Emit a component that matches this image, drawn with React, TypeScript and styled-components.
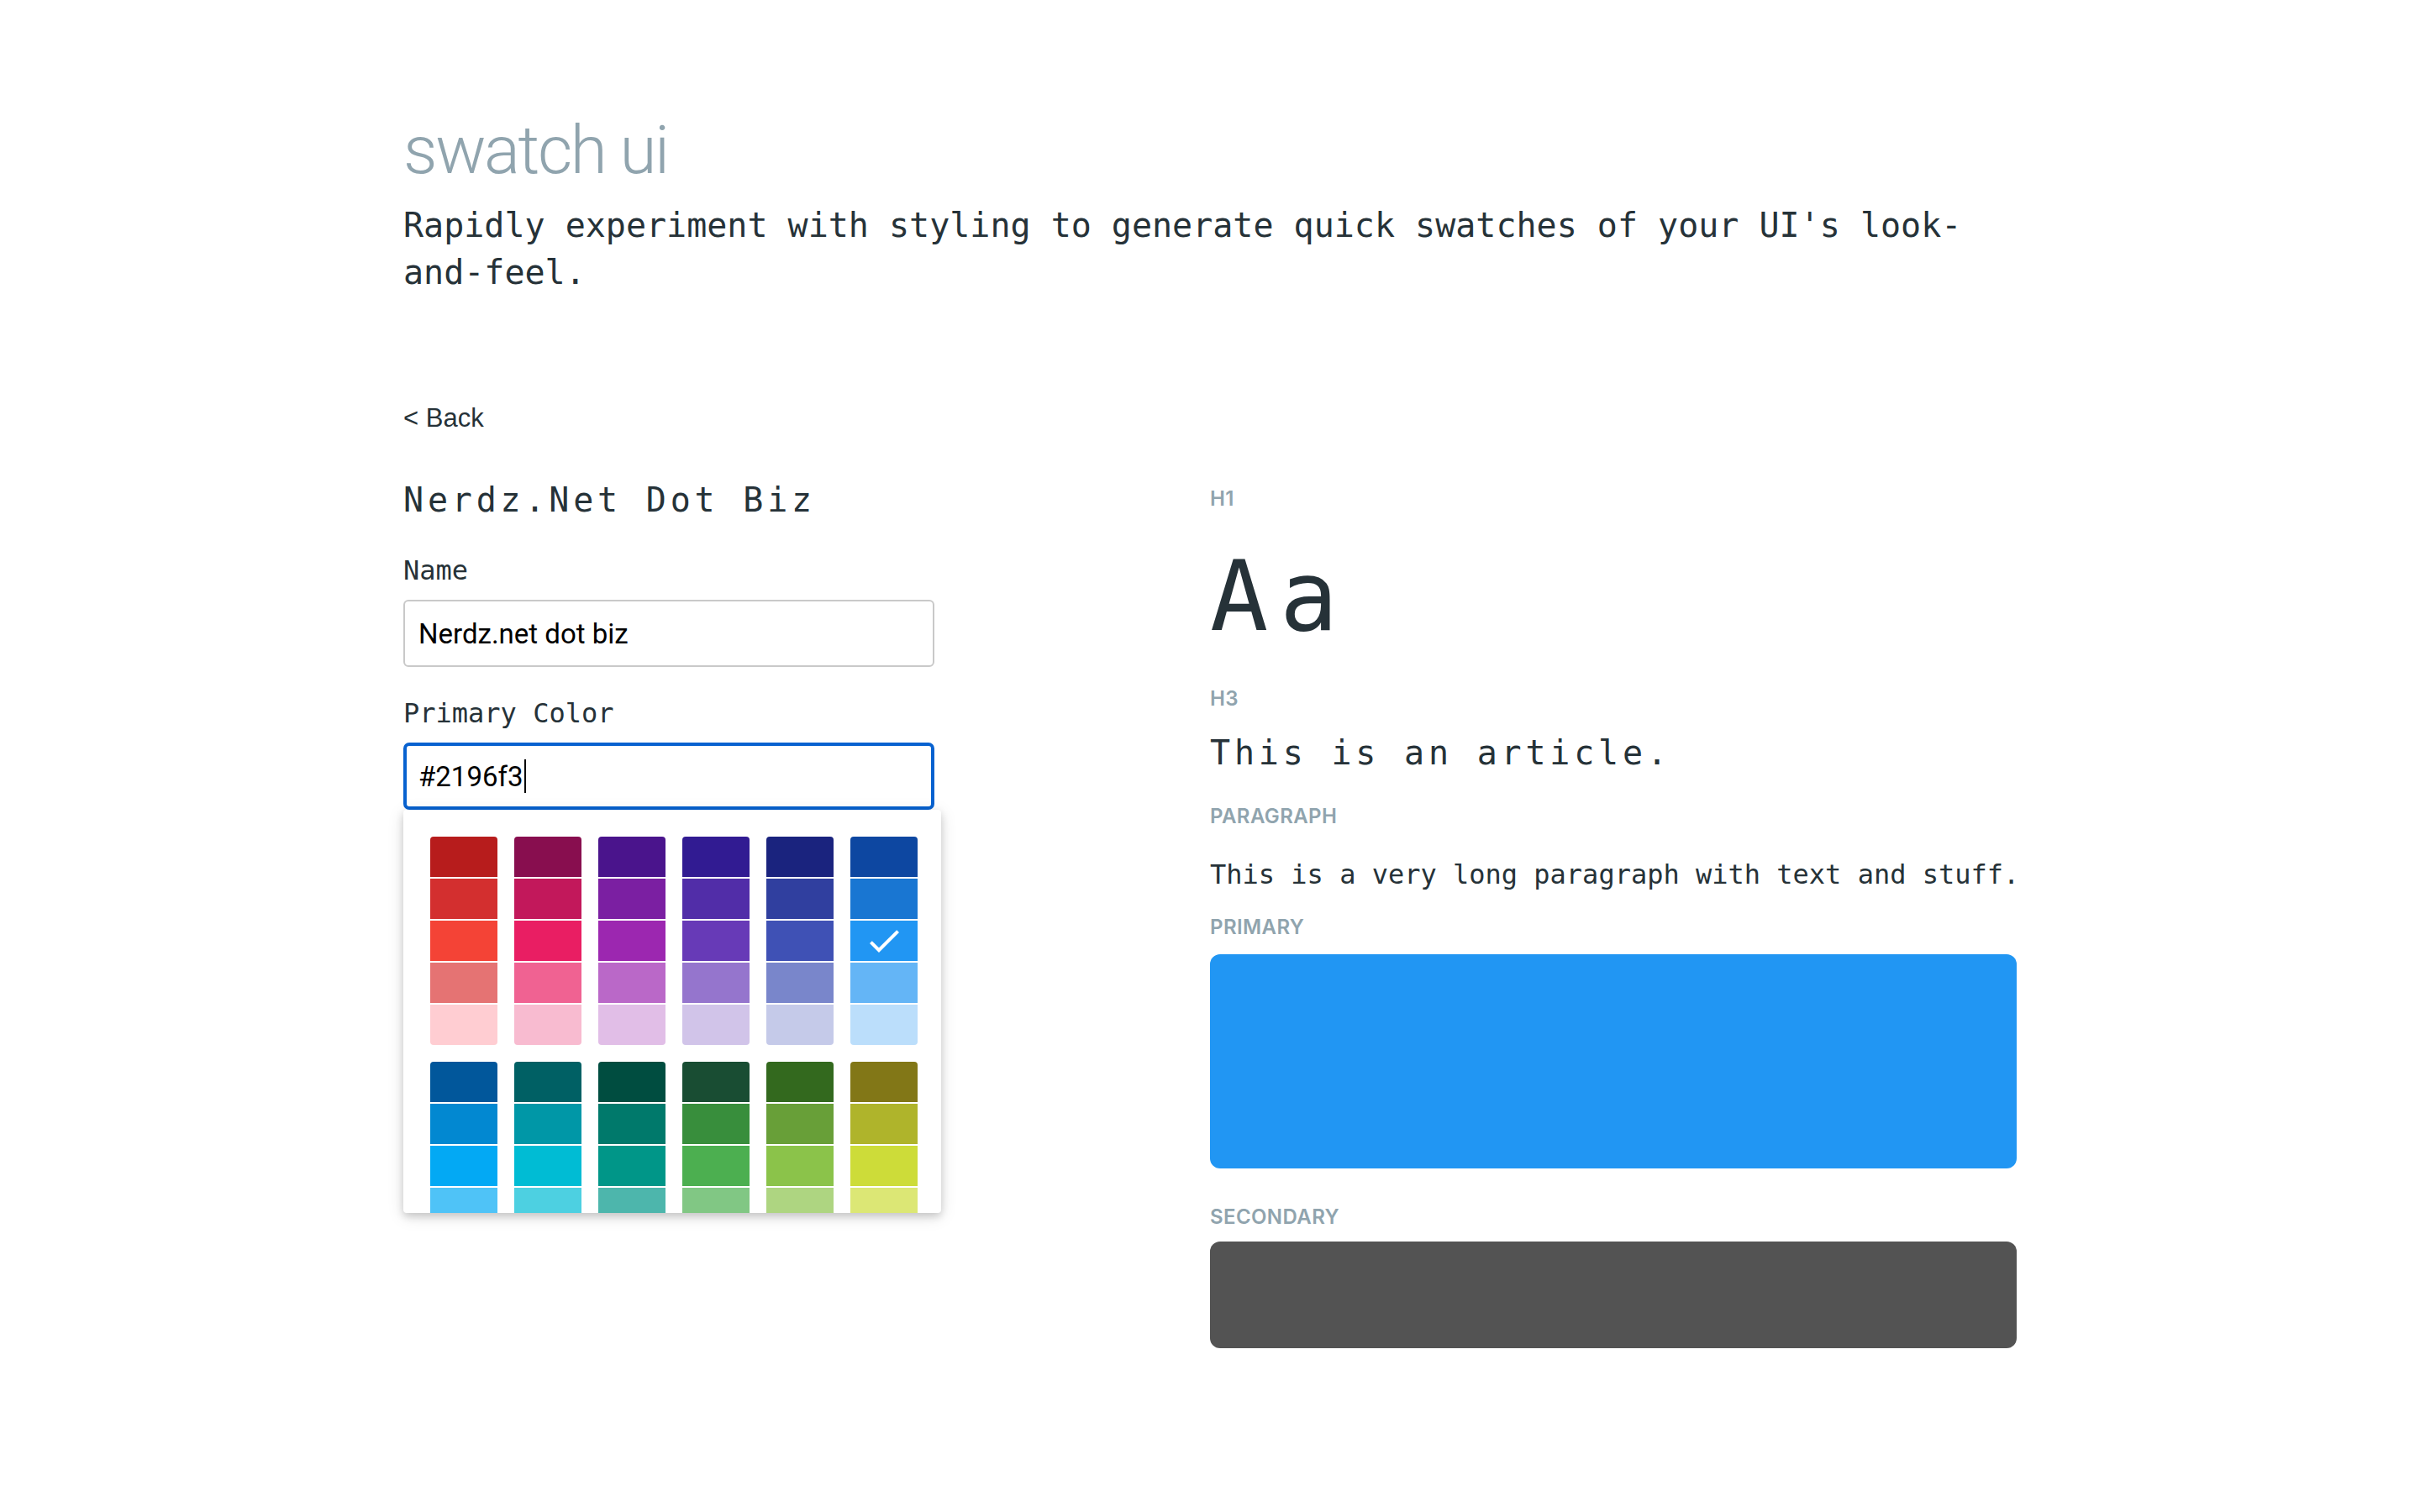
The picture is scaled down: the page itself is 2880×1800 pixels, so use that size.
import React from "react";
import styled, { createGlobalStyle } from "styled-components";

const GlobalStyle = createGlobalStyle`
  html, body { margin: 0; padding: 0; background: #ffffff; }
  body { color: #263238; font-family: "Inter", "Liberation Sans", sans-serif; }
  * { box-sizing: border-box; }
`;

const MONO = `"DejaVu Sans Mono", "Liberation Mono", monospace`;

const Page = styled.div`
  width: 1920px;
  margin: 0 auto;
  padding-top: 139px;
  padding-bottom: 120px;
`;

const Title = styled.h1`
  margin: 0;
  font-family: "Roboto", "Inter", sans-serif;
  font-weight: 300;
  font-size: 80px;
  line-height: 80px;
  letter-spacing: -2.4px;
  color: #90a4ae;
`;

const Tagline = styled.p`
  margin: 21px 0 0;
  font-family: ${MONO};
  font-size: 40px;
  line-height: 56px;
  color: #263238;
`;

const BackLink = styled.a`
  display: block;
  margin-top: 126px;
  font-family: "Liberation Sans", "Inter", sans-serif;
  font-size: 31px;
  line-height: 40px;
  color: #263238;
  text-decoration: none;
`;

const Columns = styled.div`
  display: grid;
  grid-template-columns: 960px 960px;
  margin-top: 49px;
`;

const FormColumn = styled.section`
  display: flex;
  flex-direction: column;
  align-items: flex-start;
`;

const Heading = styled.h3<{ $size?: number }>`
  margin: 0;
  font-family: ${MONO};
  font-weight: 400;
  font-size: ${(p) => p.$size ?? 40}px;
  line-height: ${(p) => Math.round((p.$size ?? 40) * 1.4)}px;
  letter-spacing: 0.12em;
  color: #263238;
`;

const Field = styled.div<{ $gap?: number }>`
  position: relative;
  display: flex;
  flex-direction: column;
  margin-top: ${(p) => p.$gap ?? 35}px;
`;

const FieldLabel = styled.label`
  font-family: ${MONO};
  font-size: 32px;
  line-height: 40px;
  color: #263238;
  margin-bottom: 15px;
`;

const TextInput = styled.input`
  width: 632px;
  height: 80px;
  padding: 0 16px;
  border: 2px solid #c9c9c9;
  border-radius: 6px;
  font-family: "Roboto", "Liberation Sans", sans-serif;
  font-size: 33px;
  color: #000000;
  background: #ffffff;
  outline: none;
`;

const FocusedInput = styled.div`
  display: flex;
  align-items: center;
  width: 632px;
  height: 80px;
  padding: 0 14px;
  border: 4px solid #0862d0;
  border-radius: 7px;
  font-family: "Roboto", "Liberation Sans", sans-serif;
  font-size: 33px;
  color: #000000;
  background: #ffffff;
`;

const Caret = styled.span`
  display: inline-block;
  width: 2px;
  height: 40px;
  margin-left: 1px;
  background: #000000;
`;

const Popover = styled.div`
  position: absolute;
  top: 100%;
  left: 0;
  width: 640px;
  height: 480px;
  background: #ffffff;
  border-radius: 4px;
  box-shadow: 0 4px 20px rgba(0, 0, 0, 0.12), 0 4px 10px rgba(0, 0, 0, 0.16);
  overflow: hidden;
  z-index: 2;
`;

const SwatchScroller = styled.div`
  display: flex;
  flex-wrap: wrap;
  padding: 32px 0 12px 32px;
`;

const SwatchGroup = styled.div`
  width: 80px;
  margin-right: 20px;
  padding-bottom: 20px;
  display: flex;
  flex-direction: column;
  gap: 2px;
`;

const Swatch = styled.div<{ $color: string }>`
  height: 48px;
  background: ${(p) => p.$color};
  display: flex;
  align-items: center;
  justify-content: center;
  &:first-child { border-radius: 4px 4px 0 0; }
  &:last-child { border-radius: 0 0 4px 4px; }
`;

const PreviewColumn = styled.section`
  display: flex;
  flex-direction: column;
  padding-top: 13px;
`;

const Block = styled.div<{ $gap: number }>`
  margin-top: ${(p) => p.$gap}px;
  display: flex;
  flex-direction: column;
`;

const Caption = styled.div`
  font-family: "Inter", "Liberation Sans", sans-serif;
  font-weight: 600;
  font-size: 24px;
  line-height: 28px;
  letter-spacing: 0.4px;
  text-transform: uppercase;
  color: #90a4ae;
`;

const Paragraph = styled.p`
  margin: 0;
  font-family: ${MONO};
  font-size: 32px;
  line-height: 48px;
  white-space: nowrap;
  color: #263238;
`;

const ColorBox = styled.div<{ $color: string; $height: number }>`
  width: 960px;
  height: ${(p) => p.$height}px;
  background: ${(p) => p.$color};
  border-radius: 12px;
`;

const GROUPS: string[][] = [
  ["#b71c1c", "#d32f2f", "#f44336", "#e57373", "#ffcdd2"],
  ["#880e4f", "#c2185b", "#e91e63", "#f06292", "#f8bbd0"],
  ["#4a148c", "#7b1fa2", "#9c27b0", "#ba68c8", "#e1bee7"],
  ["#311b92", "#512da8", "#673ab7", "#9575cd", "#d1c4e9"],
  ["#1a237e", "#303f9f", "#3f51b5", "#7986cb", "#c5cae9"],
  ["#0d47a1", "#1976d2", "#2196f3", "#64b5f6", "#bbdefb"],
  ["#01579b", "#0288d1", "#03a9f4", "#4fc3f7", "#b3e5fc"],
  ["#006064", "#0097a7", "#00bcd4", "#4dd0e1", "#b2ebf2"],
  ["#004d40", "#00796b", "#009688", "#4db6ac", "#b2dfdb"],
  ["#194d33", "#388e3c", "#4caf50", "#81c784", "#c8e6c9"],
  ["#33691e", "#689f38", "#8bc34a", "#aed581", "#dcedc8"],
  ["#827717", "#afb42b", "#cddc39", "#dce775", "#f0f4c3"],
];

const SELECTED = "#2196f3";

const Check = () => (
  <svg width="48" height="48" viewBox="0 0 24 24">
    <path fill="#ffffff" d="M21,7L9,19L3.5,13.5L4.91,12.09L9,16.17L19.59,5.59L21,7Z" />
  </svg>
);

export default function App() {
  return (
    <>
      <GlobalStyle />
      <Page>
        <Title>swatch ui</Title>
        <Tagline>
          Rapidly experiment with styling to generate quick swatches of your UI's look-and-feel.
        </Tagline>
        <BackLink href="#">&lt; Back</BackLink>
        <Columns>
          <FormColumn>
            <Heading>Nerdz.Net Dot Biz</Heading>
            <Field $gap={36}>
              <FieldLabel>Name</FieldLabel>
              <TextInput defaultValue="Nerdz.net dot biz" />
            </Field>
            <Field>
              <FieldLabel>Primary Color</FieldLabel>
              <FocusedInput>
                <span>#2196f3</span>
                <Caret />
              </FocusedInput>
              <Popover>
                <SwatchScroller>
                  {GROUPS.map((g, i) => (
                    <SwatchGroup key={i}>
                      {g.map((c) => (
                        <Swatch key={c} $color={c}>
                          {c === SELECTED && <Check />}
                        </Swatch>
                      ))}
                    </SwatchGroup>
                  ))}
                </SwatchScroller>
              </Popover>
            </Field>
          </FormColumn>
          <PreviewColumn>
            <Caption>H1</Caption>
            <Block $gap={22}>
              <Heading $size={115}>Aa</Heading>
            </Block>
            <Block $gap={27}>
              <Caption>H3</Caption>
            </Block>
            <Block $gap={22}>
              <Heading>This is an article.</Heading>
            </Block>
            <Block $gap={34}>
              <Caption>Paragraph</Caption>
            </Block>
            <Block $gap={31}>
              <Paragraph>This is a very long paragraph with text and stuff.</Paragraph>
            </Block>
            <Block $gap={25}>
              <Caption>Primary</Caption>
            </Block>
            <Block $gap={18}>
              <ColorBox $color="#2196f3" $height={255} />
            </Block>
            <Block $gap={44}>
              <Caption>Secondary</Caption>
            </Block>
            <Block $gap={15}>
              <ColorBox $color="#535353" $height={127} />
            </Block>
          </PreviewColumn>
        </Columns>
      </Page>
    </>
  );
}
